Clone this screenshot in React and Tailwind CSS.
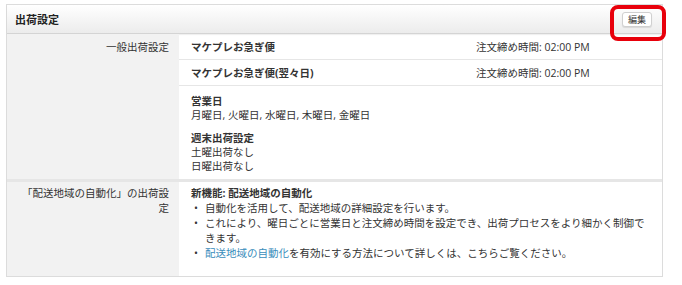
import React from 'react'

const font = { fontFamily: '"Open Sans", "Noto Sans CJK JP", sans-serif' }

const rows = [
  { name: 'マケプレお急ぎ便', cutoff: '注文締め時間: 02:00 PM' },
  { name: 'マケプレお急ぎ便(翌々日)', cutoff: '注文締め時間: 02:00 PM' },
]

const Bullet = ({ children }) => (
  <li className="flex">
    <span className="w-[14px] shrink-0 pl-[3px]">•</span>
    <span>{children}</span>
  </li>
)

export default function App() {
  return (
    <div
      className="min-h-[285px] w-[682px] bg-white pl-[6px] pt-[4px] text-[10.5px] leading-[14px] text-[#333]"
      style={font}
    >
      <div className="relative w-[657px] border border-[#dcdcdc]">
        {/* en-tête */}
        <div className="flex h-[29px] items-center justify-between border-b border-[#d4d4d4] bg-gradient-to-b from-white to-[#ececec] pl-[8px] pr-[10px] shadow-[0_1px_1px_rgba(0,0,0,0.06)]">
          <span className="pt-[1px] text-[11px] font-bold text-[#222]">出荷設定</span>
          <button className="h-[15px] rounded-[3px] border border-[#d0d0d0] bg-white px-[5px] text-[9px] leading-[13px] text-[#333] shadow-[0_1px_1px_rgba(0,0,0,0.1)]">
            編集
          </button>
        </div>
        {/* annotation rouge */}
        <div className="absolute left-[603px] top-[0px] h-[36px] w-[56px] rounded-[8px] border-[4px] border-[#e8000b]" />

        {/* section 1 */}
        <div className="grid grid-cols-[172px_1fr]">
          <div className="bg-[#f2f2f2] px-[10px] pt-[6px] text-right text-[#333]">一般出荷設定</div>
          <div>
            {rows.map((row, index) => (
              <div
                key={index}
                className="flex h-[26px] items-center border-b border-[#e6e6e6] pl-[12px]"
              >
                <span className="w-[285px] font-bold">{row.name}</span>
                <span>{row.cutoff}</span>
              </div>
            ))}
            <div className="pb-[6px] pl-[12px] pt-[8px]">
              <div className="font-bold">営業日</div>
              <div>月曜日, 火曜日, 水曜日, 木曜日, 金曜日</div>
              <div className="mt-[9px] font-bold">週末出荷設定</div>
              <div>土曜出荷なし</div>
              <div>日曜出荷なし</div>
            </div>
          </div>
        </div>

        <div className="h-[3px] bg-[#e6e6e6]" />

        {/* section 2 */}
        <div className="grid grid-cols-[172px_1fr] leading-[15px]">
          <div className="bg-[#f2f2f2] px-[10px] pt-[4px] text-right">
            「配送地域の自動化」の出荷設定
          </div>
          <div className="pb-[15px] pl-[12px] pr-[16px] pt-[4px]">
            <div className="font-bold">新機能: 配送地域の自動化</div>
            <ul>
              <Bullet>自動化を活用して、配送地域の詳細設定を行います。</Bullet>
              <Bullet>
                これにより、曜日ごとに営業日と注文締め時間を設定でき、出荷プロセスをより細かく制御できます。
              </Bullet>
              <Bullet>
                <span className="text-[#3a8dbb]">配送地域の自動化</span>
                を有効にする方法について詳しくは、こちらご覧ください。
              </Bullet>
            </ul>
          </div>
        </div>
      </div>
    </div>
  )
}
